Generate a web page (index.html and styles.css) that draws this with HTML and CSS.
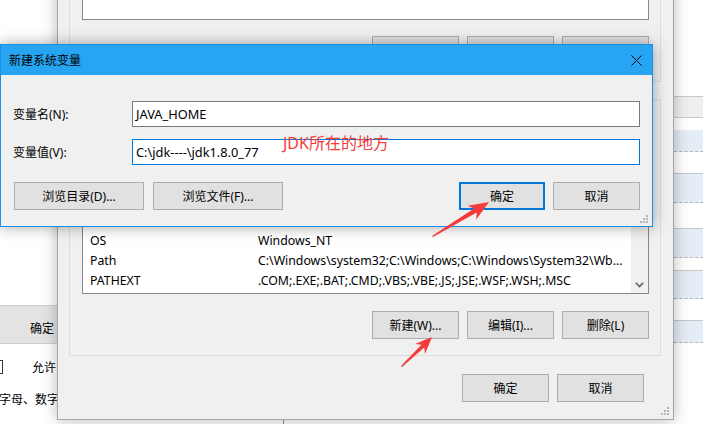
FILE: index.html
```html
<!DOCTYPE html>
<html lang="zh-CN">
<head>
  <meta charset="UTF-8">
  <title>新建系统变量</title>
  <link rel="stylesheet" href="styles.css">
</head>
<body>
  <!-- windows behind -->
  <div class="back-left">
    <div class="bl-bar"><span class="bl-ok">确定</span></div>
    <div class="bl-row"><span class="bl-check"></span><span class="bl-allow">允许</span></div>
    <div class="bl-row bl-row2">字母、数字</div>
  </div>

  <div class="back-right">
    <div class="rw-top"></div>
    <div class="rw-sep"></div>
    <div class="rw-head"></div>
    <div class="rw-sep"></div>
    <div class="rw-gap g12"></div>
    <div class="rw-item i21"></div>
    <div class="rw-gap g21"></div>
    <div class="rw-sep"></div>
    <div class="rw-item i28"></div>
    <div class="rw-gap g25"></div>
    <div class="rw-sep"></div>
    <div class="rw-item i28"></div>
    <div class="rw-gap g12"></div>
    <div class="rw-sep"></div>
    <div class="rw-item i27"></div>
    <div class="rw-gap g21"></div>
    <div class="rw-sep"></div>
    <div class="rw-item i21"></div>
  </div>

  <!-- 环境变量 -->
  <div class="env">
    <div class="group group-user">
      <div class="listbox lb-user"></div>
      <div class="btn-row">
        <button class="btn">新建(N)...</button>
        <button class="btn">编辑(E)...</button>
        <button class="btn">删除(D)</button>
      </div>
    </div>

    <div class="group group-sys">
      <div class="listbox lb-sys">
        <div class="lb-rows">
          <div class="lb-row"><span class="lb-name">OS</span><span class="lb-val">Windows_NT</span></div>
          <div class="lb-row"><span class="lb-name">Path</span><span class="lb-val">C:\Windows\system32;C:\Windows;C:\Windows\System32\Wb...</span></div>
          <div class="lb-row"><span class="lb-name">PATHEXT</span><span class="lb-val">.COM;.EXE;.BAT;.CMD;.VBS;.VBE;.JS;.JSE;.WSF;.WSH;.MSC</span></div>
        </div>
        <div class="lb-scroll">
          <svg width="9" height="6" viewBox="0 0 9 6"><polyline points="0.8,0.8 4.5,4.6 8.2,0.8" fill="none" stroke="#606060" stroke-width="1.6"/></svg>
        </div>
      </div>
      <div class="btn-row">
        <button class="btn">新建(W)...</button>
        <button class="btn">编辑(I)...</button>
        <button class="btn">删除(L)</button>
      </div>
    </div>

    <div class="env-foot">
      <button class="btn">确定</button>
      <button class="btn">取消</button>
    </div>

    <svg class="grip grip-env" width="9" height="9" viewBox="0 0 9 9">
      <rect x="6" y="0" width="2" height="2"/><rect x="3" y="3" width="2" height="2"/><rect x="6" y="3" width="2" height="2"/>
      <rect x="0" y="6" width="2" height="2"/><rect x="3" y="6" width="2" height="2"/><rect x="6" y="6" width="2" height="2"/>
    </svg>
  </div>

  <!-- 新建系统变量 -->
  <div class="dlg">
    <div class="dlg-title">
      <span>新建系统变量</span>
      <svg class="dlg-close" width="11" height="11" viewBox="0 0 11 11"><path d="M0.5 0.5L10.5 10.5M10.5 0.5L0.5 10.5" stroke="#000" stroke-width="1"/></svg>
    </div>
    <div class="dlg-body">
      <div class="field">
        <label class="field-label">变量名(N):</label>
        <div class="field-input">JAVA_HOME</div>
      </div>
      <div class="field field-second">
        <label class="field-label">变量值(V):</label>
        <div class="field-input focused">C:\jdk----\jdk1.8.0_77</div>
      </div>
      <div class="dlg-buttons">
        <button class="btn btn-wide">浏览目录(D)...</button>
        <button class="btn btn-wide">浏览文件(F)...</button>
        <span class="spacer"></span>
        <button class="btn btn-default">确定</button>
        <button class="btn">取消</button>
      </div>
    </div>
    <svg class="grip grip-dlg" width="9" height="9" viewBox="0 0 9 9">
      <rect x="6" y="0" width="2" height="2"/><rect x="3" y="3" width="2" height="2"/><rect x="6" y="3" width="2" height="2"/>
      <rect x="0" y="6" width="2" height="2"/><rect x="3" y="6" width="2" height="2"/><rect x="6" y="6" width="2" height="2"/>
    </svg>
  </div>

  <!-- annotations -->
  <div class="note">JDK所在的地方</div>
  <svg class="arrows" width="703" height="424" viewBox="0 0 703 424">
    <polygon points="433,237 476.7,212.6 476.2,219.4 489,202 467.8,205.8 474.1,208.4 432,236"/>
    <polygon points="402,367 424.2,347.6 425,354 432,337 415,344 421.4,344.8 401,366"/>
  </svg>
</body>
</html>
```

FILE: styles.css
```css
* {
  box-sizing: border-box;
}

body {
  margin: 0;
  width: 703px;
  height: 424px;
  overflow: hidden;
  position: relative;
  background: #fff;
  font-family: "Noto Sans", "Noto Sans CJK SC", sans-serif;
  font-size: 12px;
  color: #000;
}

/* left window behind */
.back-left {
  position: absolute;
  left: 0;
  top: 0;
  width: 284px;
  height: 424px;
  background: #fff;
  border-right: 1px solid #8c8c8c;
  padding-top: 305px;
  display: flex;
  flex-direction: column;
}

.bl-bar {
  height: 39px;
  border-top: 1px solid #cfcfcf;
  border-bottom: 1px solid #cfcfcf;
  background: #e3e3e3;
  display: flex;
  align-items: flex-end;
  padding: 0 0 6px 30px;
}

.bl-row {
  margin-top: 15px;
  height: 16px;
  display: flex;
  align-items: center;
}

.bl-check {
  width: 14px;
  height: 14px;
  margin-left: -11px;
  border: 1px solid #333;
}

.bl-allow {
  margin-left: 29px;
}

.bl-row2 {
  margin-top: 16px;
  margin-left: -1px;
}

/* right window behind */
.back-right {
  position: absolute;
  left: 674px;
  top: 0;
  width: 40px;
  height: 424px;
  background: #fff;
  display: flex;
  flex-direction: column;
}

.rw-top { height: 96px; }
.rw-sep { height: 1px; background: #c8c8c8; }
.rw-head { height: 20px; background: #efefef; }
.rw-gap.g12 { height: 12px; }
.rw-gap.g21 { height: 21px; }
.rw-gap.g25 { height: 25px; }

.rw-item {
  background: #e4ecf6;
  border-bottom: 1px dashed #b4b4b4;
}
.rw-item.i21 { height: 22px; }
.rw-item.i27 { height: 28px; }
.rw-item.i28 { height: 29px; }

/* environment variables window */
.env {
  position: absolute;
  left: 57px;
  top: -60px;
  width: 617px;
  background: #f0f0f0;
  border: 1px solid #a6a6a6;
  box-shadow: 0 0 14px rgba(0, 0, 0, 0.28);
  padding: 14px 12px 17px 11px;
}

.group {
  border: 1px solid #dcdcdc;
  padding: 14px 11px 17px 12px;
}

.group-sys {
  margin-top: 17px;
  padding-top: 15px;
  padding-bottom: 16px;
}

.listbox {
  background: #fff;
  border: 1px solid #828790;
}

.lb-user {
  height: 50px;
}

.lb-sys {
  height: 179px;
  display: flex;
}

.lb-rows {
  flex: 1;
  min-width: 0;
  display: flex;
  flex-direction: column;
  justify-content: flex-end;
  padding: 0 0 3px 7px;
}

.lb-row {
  height: 20px;
  display: flex;
  align-items: center;
  white-space: nowrap;
  overflow: hidden;
  font-size: 12.3px;
}

.lb-name {
  width: 168px;
  flex-shrink: 0;
}

.lb-scroll {
  width: 17px;
  background: #f0f0f0;
  display: flex;
  align-items: flex-end;
  justify-content: center;
  padding-bottom: 5px;
}

.btn-row {
  margin-top: 16px;
  display: flex;
  justify-content: flex-end;
  gap: 8px;
}

.group-sys .btn-row {
  margin-top: 17px;
}

.btn {
  width: 87px;
  height: 28px;
  margin: 0;
  padding: 0;
  background: #e1e1e1;
  border: 1px solid #adadad;
  font: inherit;
  color: #000;
}

.env-foot {
  margin-top: 18px;
  padding-right: 17px;
  display: flex;
  justify-content: flex-end;
  gap: 8px;
}

.grip {
  position: absolute;
  fill: #b4b4b4;
}

.grip-env {
  right: 3px;
  bottom: 3px;
}

/* new system variable dialog */
.dlg {
  position: absolute;
  left: 0;
  top: 44px;
  width: 653px;
  background: #f0f0f0;
  border: 1px solid #1b8fe4;
  box-shadow: 0 0 14px rgba(0, 0, 0, 0.35);
}

.dlg-title {
  height: 30px;
  background: #27a5f2;
  display: flex;
  align-items: center;
  justify-content: space-between;
  padding: 0 10px 0 8px;
}

.dlg-body {
  padding: 26px 12px 16px 12px;
}

.field {
  display: flex;
  align-items: center;
}

.field-second {
  margin-top: 12px;
}

.field-label {
  width: 119px;
}

.field-input {
  flex: 1;
  height: 26px;
  background: #fff;
  border: 1px solid #7a7a7a;
  padding-left: 3px;
  display: flex;
  align-items: center;
  font-size: 12.8px;
}

.field-input.focused {
  border-color: #0078d7;
}

.dlg-buttons {
  margin-top: 17px;
  display: flex;
  padding-left: 1px;
}

.btn-wide {
  width: 130px;
  margin-right: 9px;
}

.spacer {
  flex: 1;
}

.btn-default {
  width: 86px;
  margin-right: 8px;
  border: 2px solid #0078d7;
}

.grip-dlg {
  right: 3px;
  bottom: 2px;
}

/* red annotations */
.note {
  position: absolute;
  left: 283px;
  top: 134px;
  font-size: 16px;
  line-height: 18px;
  color: #f23c3c;
}

.arrows {
  position: absolute;
  left: 0;
  top: 0;
  fill: #f23c3c;
}
```
